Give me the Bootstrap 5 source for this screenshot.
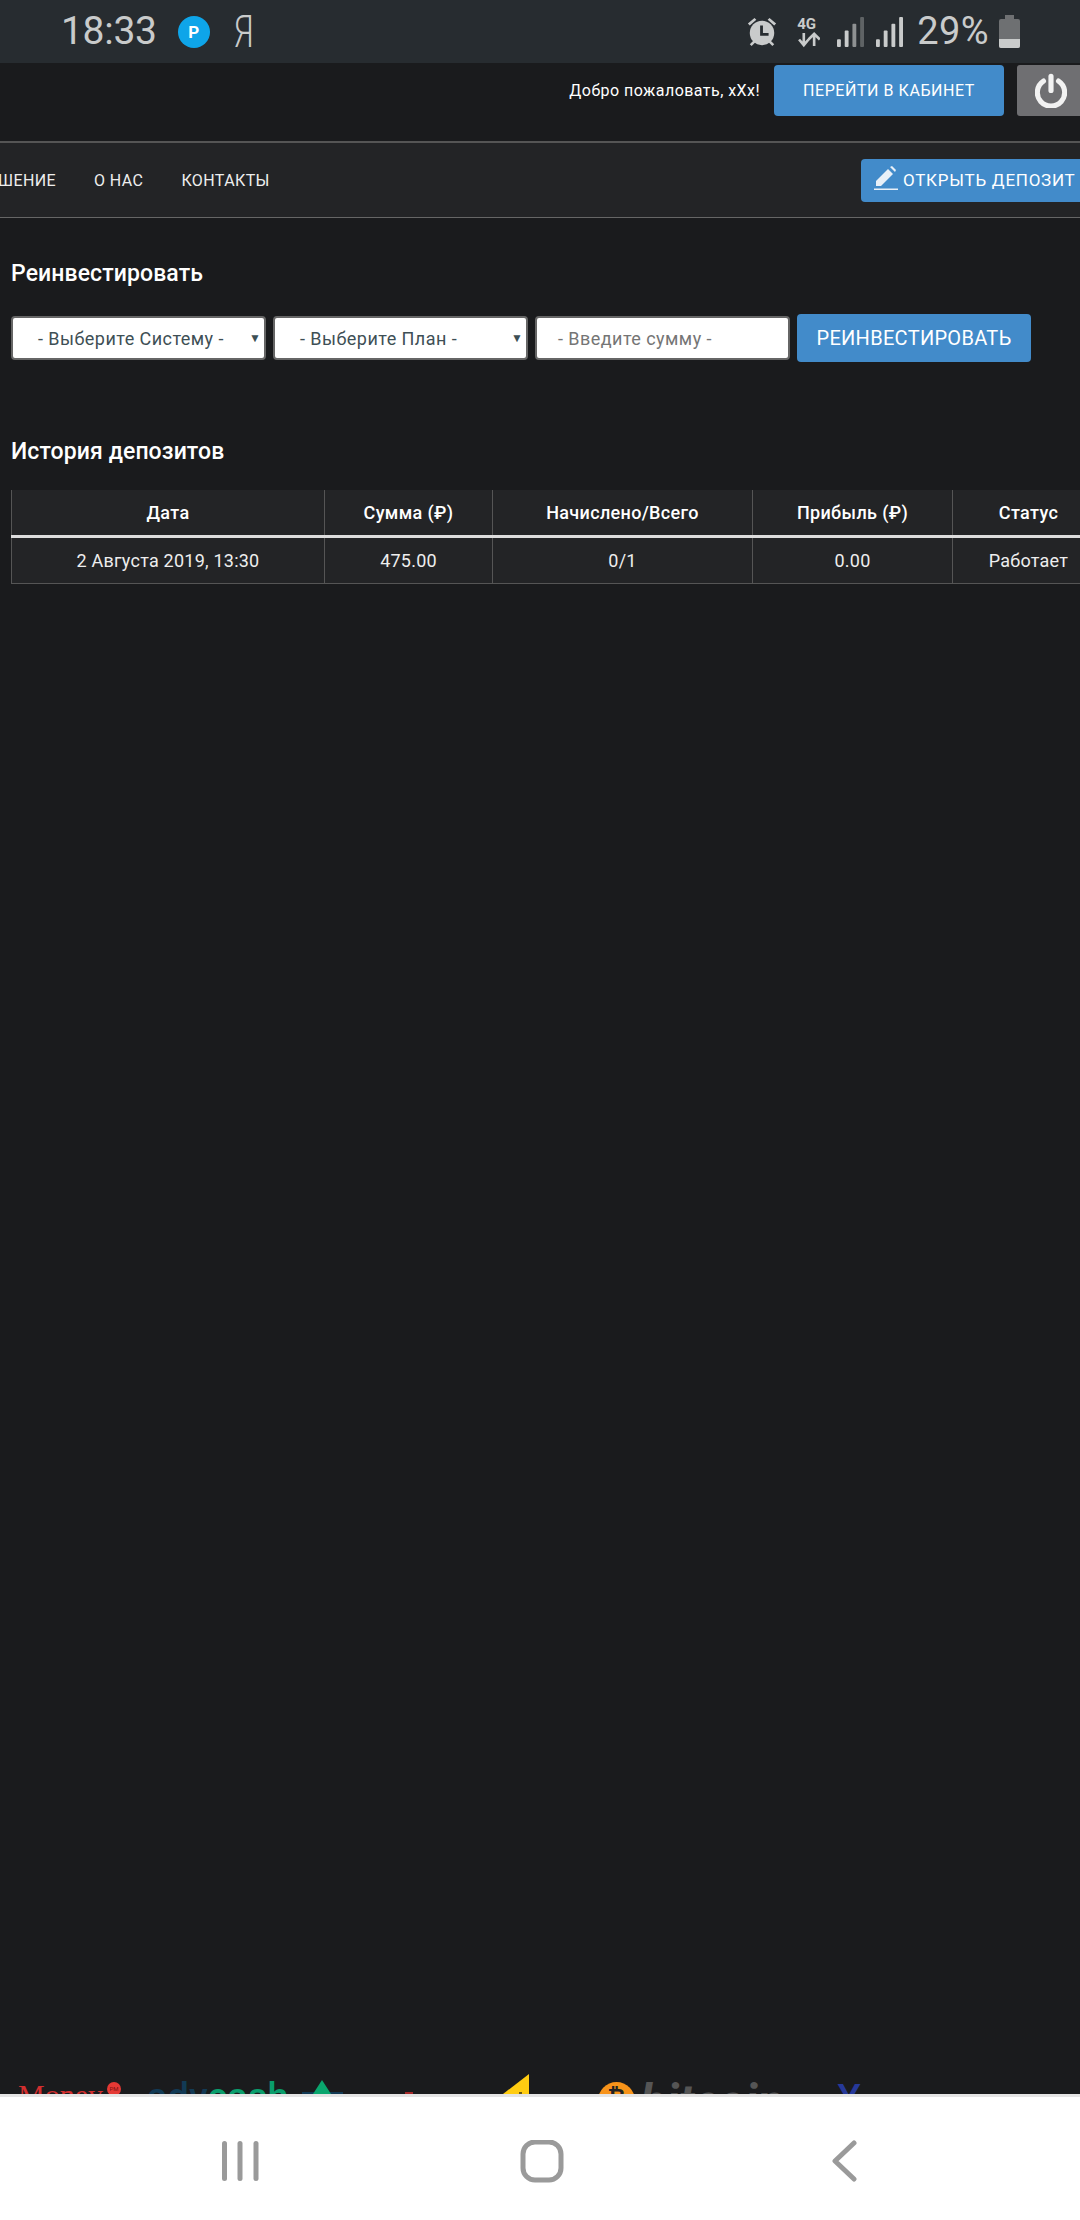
<!DOCTYPE html>
<html lang="ru">
<head>
<meta charset="utf-8">
<title>История депозитов</title>
<link href="https://cdn.jsdelivr.net/npm/bootstrap@5.3.0/dist/css/bootstrap.min.css" rel="stylesheet">
<style>
html,body{margin:0;background:#1a1b1d;}
body{font-family:Roboto,"Liberation Sans",sans-serif;color:#fff;width:1080px;height:2220px;overflow:hidden;display:flex;flex-direction:column;}
.status-strip{height:63px;flex:none;background:#272c30;color:#c9cbcb;padding:0 60px 0 61px;}
.clock-text{font-size:39px;line-height:63px;letter-spacing:-.3px;}
.pin-p{width:32px;height:32px;border-radius:50%;background:#0ea5e9;color:#fff;font-weight:700;font-size:17px;line-height:32px;text-align:center;margin-left:21px;}
.ya-text{font-size:45px;line-height:63px;margin-left:20px;font-weight:300;display:inline-block;transform:scaleX(.72);}
.pct-text{font-size:38px;line-height:63px;margin:0 10px 0 14px;letter-spacing:.4px;}
.gap-a{margin-left:18px;}
.gap-b{margin-left:17px;}
.gap-c{margin-left:12px;}
.top-row{height:78px;flex:none;padding-top:2px;}
.hello-text{font-size:16px;margin-right:14px;margin-top:14px;letter-spacing:.45px;}
.blue-btn{background:#428bca;border:0;border-radius:4px;color:#fff;}
.blue-btn:hover{background:#428bca;color:#fff;}
.cabinet-btn{width:230px;height:51px;font-size:16px;padding:0;letter-spacing:.55px;flex:none;}
.power-box{width:63px;height:51px;background:#6f6f72;border-radius:3px 0 0 3px;margin-left:13px;padding-left:18px;flex:none;}
.nav-strip{height:77px;flex:none;background:#232426;border-top:2px solid #555;border-bottom:1px solid #666;}
.nav-text{font-size:16px;color:#eee;letter-spacing:.4px;flex:none;padding-top:2px;}
.nav-a{margin-left:-2px;}
.nav-b{margin-left:38px;}
.nav-c{margin-left:38px;}
.deposit-btn{width:230px;height:43px;font-size:17px;padding:0 0 0 13px;letter-spacing:.75px;border-radius:4px 0 0 4px;white-space:nowrap;text-align:left;flex:none;margin-right:-11px;}
.page-body{flex:1 1 auto;padding:0 0 0 11px;min-height:0;display:flex;flex-direction:column;}
.sect-title{font-size:23px;font-weight:500;margin:0;line-height:26px;letter-spacing:.1px;}
.title-one{margin-top:43px;}
.title-two{margin-top:77px;}
.form-line{gap:7px;margin-top:27px;}
.fld{width:255px;height:44px;border:2px solid #666;border-radius:4px;background:#fff;color:#3e4f55;font-size:18px;padding:1px 0 0 25px;line-height:40px;letter-spacing:.45px;flex:none;position:relative;}
.sel-arrow{position:absolute;right:3px;top:0;font-size:12px;color:#3e4f55;letter-spacing:0;}
.fld-ph{color:#757575;padding-left:21px;}
.reinv-btn{width:234px;height:48px;font-size:20px;padding:0;letter-spacing:.3px;flex:none;}
.tbl-wrap{width:1093px;margin-top:25px;}
.dep-table{--bs-table-bg:#232426;--bs-table-color:#eee;border-collapse:collapse;table-layout:fixed;width:1093px;margin:0;font-size:18px;}
.dep-table th,.dep-table td{text-align:center;vertical-align:middle;padding:0;border:1px solid #555;background:#232426;color:#eee;letter-spacing:.23px;}
.dep-table th{height:46px;font-weight:500;color:#fff;border-top:0;border-bottom:3px solid #ddd;font-size:18px;letter-spacing:.35px;}
.dep-table td{height:47px;}
.cw1{width:313px;}.cw2{width:168px;}.cw3{width:260px;}.cw4{width:200px;}.cw5{width:152px;}
.spacer-fill{flex:1 1 auto;}
.logo-strip{height:20px;flex:none;overflow:hidden;margin-left:-11px;display:flex;align-items:flex-start;}
.logo-strip>*{flex:none;white-space:nowrap;}
.lg-pm{margin-left:18px;margin-top:6px;width:89px;color:#d32f2f;font-family:"Liberation Serif",serif;font-size:30px;line-height:30px;}
.lg-dot{margin-top:8px;width:14px;height:14px;border-radius:50%;background:#e53935;color:#7a1010;font-size:6px;line-height:14px;text-align:center;}
.lg-adv{margin-left:26px;margin-top:4px;width:155px;color:#0a9d6c;font-size:38px;font-weight:500;line-height:38px;}
.lg-adv-dark{color:#123a55;}
.lg-tri{width:41px;height:20px;}
.lg-red{margin-left:62px;margin-top:18px;width:8px;height:2px;background:#a52a2a;}
.lg-yel{margin-left:90px;width:26px;height:20px;}
.lg-btc{margin-left:69px;margin-top:8px;width:37px;height:37px;border-radius:50%;background:#f7931a;color:#222;text-align:center;font-size:22px;font-weight:700;line-height:30px;}
.lg-bit{margin-left:5px;margin-top:4px;width:197px;color:#555;font-size:48px;font-weight:700;font-style:italic;line-height:48px;}
.lg-y{margin-top:6px;width:25px;color:#26399a;font-family:"Liberation Sans",sans-serif;font-size:36px;font-weight:700;line-height:36px;}
.sys-nav{height:126px;flex:none;background:#fff;border-top:3px solid #e4e4e4;padding-top:43px;}
.nav-i1{margin-left:221px;flex:none;}
.nav-i2{margin-left:261px;flex:none;}
.nav-i3{margin-left:266px;flex:none;}
</style>
</head>
<body>
<div class="status-strip d-flex align-items-center">
  <span class="clock-text">18:33</span>
  <span class="pin-p">P</span>
  <span class="ya-text">Я</span>
  <div class="ms-auto d-flex align-items-center">
    <svg width="34" height="32" viewBox="0 0 34 34"><g fill="#c9cbcb"><circle cx="17" cy="18" r="13"/><path d="M2 8l7-6 2 2-7 6zM32 8l-7-6-2 2 7 6z"/><path d="M4 30l4-4 2 2-4 4zM30 30l-4-4-2 2 4 4z"/></g><path d="M15 10h3v8h6v3h-9z" fill="#272c30"/></svg>
    <svg class="gap-a" width="23" height="32" viewBox="0 0 24 34"><text x="0" y="14" font-family="Roboto" font-weight="700" font-size="16" fill="#c9cbcb">4G</text><path d="M7 18v13M2 25l5 6 5-6M18 32V20M12 25l6-6 6 6" fill="none" stroke="#c9cbcb" stroke-width="2.8"/></svg>
    <svg class="gap-b" width="27" height="31" viewBox="0 0 28 32"><g fill="#c9cbcb"><rect x="0" y="24" width="4" height="8" rx="1"/><rect x="8" y="15" width="4" height="17" rx="1"/></g><rect x="16" y="8" width="4" height="24" rx="1" fill="#8e9192"/><rect x="24" y="1" width="4" height="31" rx="1" fill="#5f6365"/></svg>
    <svg class="gap-c" width="27" height="31" viewBox="0 0 28 32"><g fill="#c9cbcb"><rect x="0" y="24" width="4" height="8" rx="1"/><rect x="8" y="15" width="4" height="17" rx="1"/><rect x="16" y="8" width="4" height="24" rx="1"/><rect x="24" y="1" width="4" height="31" rx="1"/></g></svg>
    <span class="pct-text">29%</span>
    <svg width="21" height="33" viewBox="0 0 21 33"><path d="M6 0h9v4h4a2 2 0 012 2v25a2 2 0 01-2 2H2a2 2 0 01-2-2V6a2 2 0 012-2h4z" fill="#6e7072"/><path d="M0 24h21v7a2 2 0 01-2 2H2a2 2 0 01-2-2z" fill="#c9cbcb"/></svg>
  </div>
</div>
<div class="top-row d-flex justify-content-end align-items-start">
  <span class="hello-text">Добро пожаловать, xXx!</span>
  <button class="btn blue-btn cabinet-btn" type="button">ПЕРЕЙТИ В КАБИНЕТ</button>
  <div class="power-box d-flex align-items-center">
    <svg width="32" height="35" viewBox="0 0 34 36"><path d="M9 8a14.500 14.500 0 1016 0" fill="none" stroke="#f2f2f2" stroke-width="5.500" stroke-linecap="round"/><path d="M17 3v15" stroke="#f2f2f2" stroke-width="5.500" stroke-linecap="round"/></svg>
  </div>
</div>
<nav class="nav-strip d-flex align-items-center">
  <span class="nav-text nav-a">ШЕНИЕ</span>
  <span class="nav-text nav-b">О НАС</span>
  <span class="nav-text nav-c">КОНТАКТЫ</span>
  <button class="btn blue-btn deposit-btn ms-auto" type="button"><svg width="24" height="24" viewBox="0 0 24 24" class="align-text-bottom"><path d="M2 15L14 3l5 5L7 20H2z" fill="#e8f0f8"/><path d="M16 1l2-1 4 4-1 2z" fill="#e8f0f8"/><rect x="0" y="22.500" width="24" height="1.500" fill="#e8f0f8"/></svg> ОТКРЫТЬ ДЕПОЗИТ</button>
</nav>
<main class="page-body">
  <h2 class="sect-title title-one">Реинвестировать</h2>
  <div class="d-flex form-line align-items-center">
    <div class="fld">- Выберите Систему -<span class="sel-arrow">▼</span></div>
    <div class="fld">- Выберите План -<span class="sel-arrow">▼</span></div>
    <div class="fld fld-ph">- Введите сумму -</div>
    <button class="btn blue-btn reinv-btn" type="button">РЕИНВЕСТИРОВАТЬ</button>
  </div>
  <h2 class="sect-title title-two">История депозитов</h2>
  <div class="tbl-wrap">
    <table class="table dep-table">
      <colgroup><col class="cw1"><col class="cw2"><col class="cw3"><col class="cw4"><col class="cw5"></colgroup>
      <thead><tr><th>Дата</th><th>Сумма (₽)</th><th>Начислено/Всего</th><th>Прибыль (₽)</th><th>Статус</th></tr></thead>
      <tbody><tr><td>2 Августа 2019, 13:30</td><td>475.00</td><td>0/1</td><td>0.00</td><td>Работает</td></tr></tbody>
    </table>
  </div>
  <div class="spacer-fill"></div>
  <div class="logo-strip">
    <span class="lg-pm">Money</span>
    <span class="lg-dot">PM</span>
    <span class="lg-adv"><span class="lg-adv-dark">adv</span>cash</span>
    <svg class="lg-tri" viewBox="0 0 41 20"><rect x="0" y="18" width="41" height="2" fill="#123a55"/><path d="M20 6l9 14H11z" fill="#0aa66e"/></svg>
    <span class="lg-red"></span>
    <svg class="lg-yel" viewBox="0 0 26 20"><path d="M26 0v20H0z" fill="#ffcc11"/><rect x="16" y="18" width="3" height="2" fill="#6b5a10"/></svg>
    <span class="lg-btc">₿</span>
    <span class="lg-bit">bitcoin</span>
    <span class="lg-y">Y</span>
  </div>
</main>
<div class="sys-nav d-flex">
  <svg class="nav-i1" width="38" height="42" viewBox="0 0 38 42"><g fill="#9a9a9a"><rect x="1" y="1" width="5" height="40" rx="2.500"/><rect x="16.500" y="1" width="5" height="40" rx="2.500"/><rect x="32.500" y="1" width="5" height="40" rx="2.500"/></g></svg>
  <svg class="nav-i2" width="44" height="44" viewBox="0 0 44 44"><rect x="3" y="2" width="38" height="38" rx="12" fill="none" stroke="#9a9a9a" stroke-width="5"/></svg>
  <svg class="nav-i3" width="30" height="42" viewBox="0 0 30 42"><path d="M24 3L5 21l19 18" fill="none" stroke="#9a9a9a" stroke-width="5" stroke-linecap="round" stroke-linejoin="round"/></svg>
</div>
<script src="https://cdn.jsdelivr.net/npm/bootstrap@5.3.0/dist/js/bootstrap.bundle.min.js"></script>
</body>
</html>
